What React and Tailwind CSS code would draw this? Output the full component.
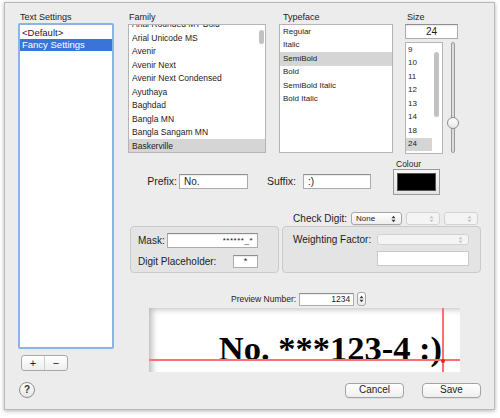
import React from "react";

const families = [
  "Arial Rounded MT Bold",
  "Arial Unicode MS",
  "Avenir",
  "Avenir Next",
  "Avenir Next Condensed",
  "Ayuthaya",
  "Baghdad",
  "Bangla MN",
  "Bangla Sangam MN",
  "Baskerville",
];
const typefaces = ["Regular", "Italic", "SemiBold", "Bold", "SemiBold Italic", "Bold Italic"];
const sizes = ["9", "10", "11", "12", "13", "14", "18", "24"];

function UpDown({ fill = "#3a3a3a" }) {
  return (
    <svg width="5" height="8" viewBox="0 0 5 8">
      <path d="M0.5 3.2 L2.5 0.7 L4.5 3.2 Z M0.5 4.8 L2.5 7.3 L4.5 4.8 Z" fill={fill} />
    </svg>
  );
}

function Field({ className, children }) {
  return (
    <div
      className={
        "bg-white border border-[#ababab] border-t-[#8e8e8e] shadow-[inset_0_1px_1px_rgba(0,0,0,0.08)] flex items-center " +
        className
      }
    >
      {children}
    </div>
  );
}

function Popup({ className, label, disabled }) {
  return (
    <div
      className={
        disabled
          ? "rounded-[3px] border border-[#d2d2d2] bg-[#f4f4f4] flex items-center justify-end pr-[5px] " + className
          : "rounded-[3px] border border-[#a6a6a6] bg-gradient-to-b from-white to-[#ededed] shadow-[0_1px_0_rgba(0,0,0,0.05)] flex items-center pl-[4px] pr-[5px] " +
            className
      }
    >
      {label && <span className="text-[8px] leading-none text-[#1c1c1c] flex-1">{label}</span>}
      <UpDown fill={disabled ? "#c4c4c4" : "#3a3a3a"} />
    </div>
  );
}

function Button({ className, children }) {
  return (
    <div
      className={
        "rounded-[4px] border border-[#a3a3a3] bg-gradient-to-b from-white to-[#efefef] shadow-[0_1px_0_rgba(0,0,0,0.06)] flex items-center justify-center text-[10px] leading-none text-[#1c1c1c] " +
        className
      }
    >
      {children}
    </div>
  );
}

export default function App() {
  return (
    <div className="w-[500px] h-[418px] bg-white pl-[4px] pt-[2px] font-['Liberation_Sans',Arial,sans-serif] text-[#1c1c1c]">
      <div className="w-[491px] h-[408px] bg-[#ececec] border border-[#b9b9b9] shadow-[0_1px_4px_rgba(0,0,0,0.3)] flex flex-col">
        {/* main row */}
        <div className="flex items-start h-[369px]">
          {/* Text settings column */}
          <div className="ml-[13px] w-[96px] mt-[9px] flex flex-col">
            <div className="h-[11px] pl-[2px] text-[9px] leading-[11px]">Text Settings</div>
            <div className="h-[326px] bg-white border-2 border-[#8db3e6] rounded-[2px] pt-[1px]">
              <div className="h-[12.5px] flex items-center pl-[2px] text-[9.5px] leading-none">&lt;Default&gt;</div>
              <div className="h-[12.5px] flex items-center pl-[2px] text-[9.5px] leading-none bg-[#3875d7] text-white">
                Fancy Settings
              </div>
            </div>
            <div className="ml-[3px] mt-[6px] w-[47px] h-[16px] rounded-[3px] border border-[#a9a9a9] bg-gradient-to-b from-white to-[#eeeeee] flex">
              <div className="flex-1 flex items-center justify-center text-[11px] leading-none border-r border-[#cfcfcf]">+</div>
              <div className="flex-1 flex items-center justify-center text-[11px] leading-none">−</div>
            </div>
          </div>

          {/* right column */}
          <div className="ml-[14px] w-[353px] mt-[9px] flex flex-col">
            {/* lists */}
            <div className="flex items-start">
              <div className="w-[138px] flex flex-col">
                <div className="h-[12px] pl-[1px] text-[9px] leading-[11px]">Family</div>
                <div className="relative h-[129px] bg-white border border-[#b4b4b4] overflow-hidden">
                  <div className="-mt-[7.5px]">
                    {families.map((f) => (
                      <div
                        key={f}
                        className={
                          f === "Baskerville"
                            ? "h-[13.5px] flex items-center pl-[3px] text-[8.5px] leading-none bg-[#d5d5d5]"
                            : "h-[13.5px] flex items-center pl-[3px] text-[8.5px] leading-none"
                        }
                      >
                        {f}
                      </div>
                    ))}
                  </div>
                  <div className="absolute left-[130px] top-[5px] w-[5px] h-[14px] rounded-full bg-[#c2c2c2]" />
                </div>
              </div>

              <div className="ml-[13px] w-[114px] flex flex-col">
                <div className="h-[12px] pl-[4px] text-[9px] leading-[11px]">Typeface</div>
                <div className="h-[129px] bg-white border border-[#b4b4b4]">
                  {typefaces.map((t) => (
                    <div
                      key={t}
                      className={
                        t === "SemiBold"
                          ? "h-[13.5px] flex items-center pl-[3px] text-[8px] leading-none bg-[#d5d5d5]"
                          : "h-[13.5px] flex items-center pl-[3px] text-[8px] leading-none"
                      }
                    >
                      {t}
                    </div>
                  ))}
                </div>
              </div>

              <div className="ml-[12px] w-[53px] flex flex-col">
                <div className="h-[12px] pl-[2px] text-[9px] leading-[11px]">Size</div>
                <Field className="h-[15px] justify-center text-[10px] leading-none">24</Field>
                <div className="mt-[3px] flex">
                  <div className="relative w-[38px] h-[112px] bg-white border border-[#b4b4b4]">
                    {sizes.map((s) => (
                      <div
                        key={s}
                        className={
                          s === "24"
                            ? "w-[26px] h-[13.5px] flex items-center pl-[2px] text-[8px] leading-none bg-[#d5d5d5]"
                            : "w-[26px] h-[13.5px] flex items-center pl-[2px] text-[8px] leading-none"
                        }
                      >
                        {s}
                      </div>
                    ))}
                    <div className="absolute left-[28px] top-[9px] w-[5px] h-[65px] rounded-full bg-[#c2c2c2]" />
                  </div>
                  <div className="relative w-[15px] h-[112px] flex justify-center pl-[5px]">
                    <div className="w-[4px] h-[111px] rounded-full bg-[#dcdcdc] border border-[#9b9b9b]" />
                    <div className="absolute left-[4px] top-[75px] w-[12px] h-[12px] rounded-full bg-gradient-to-b from-white to-[#e6e6e6] border border-[#8e8e8e]" />
                  </div>
                </div>
              </div>
            </div>

            {/* prefix / suffix / colour */}
            <div className="mt-[5px] flex items-start">
              <div className="mt-[15px] w-[49px] h-[15px] text-right text-[10.5px] leading-[15px]">Prefix:</div>
              <Field className="mt-[15px] ml-[2px] w-[69px] h-[15px] pl-[4px] text-[10px] leading-none">No.</Field>
              <div className="mt-[15px] ml-[19px] w-[33px] h-[15px] text-[10.5px] leading-[15px]">Suffix:</div>
              <Field className="mt-[15px] ml-[3px] w-[68px] h-[15px] pl-[4px] text-[10px] leading-none">:)</Field>
              <div className="ml-[22px] flex flex-col">
                <div className="h-[10px] pl-[3px] text-[8.5px] leading-[10px]">Colour</div>
                <div className="w-[47px] h-[26px] border border-[#9a9a9a] bg-gradient-to-b from-[#f6f6f6] to-[#e4e4e4] p-[3px]">
                  <div className="w-full h-full bg-black border border-[#555]" />
                </div>
              </div>
            </div>

            {/* check digit */}
            <div className="mt-[17px] h-[13px] flex items-center justify-end pr-[3px]">
              <span className="mr-[4px] text-[10px] leading-none">Check Digit:</span>
              <Popup className="w-[51px] h-[13px]" label="None" />
              <Popup className="ml-[4px] w-[34px] h-[13px]" disabled />
              <Popup className="ml-[4px] w-[34px] h-[13px]" disabled />
            </div>

            {/* boxes */}
            <div className="mt-[1px] ml-[2px] flex gap-[3px]">
              <div className="w-[149px] h-[47px] rounded-[4px] border border-[#cacaca] bg-[#e4e4e4] pt-[6px] pl-[7px] pr-[20px]">
                <div className="h-[15px] flex items-center">
                  <span className="text-[10px] leading-none">Mask:</span>
                  <Field className="ml-auto w-[91px] h-[15px] justify-end pr-[4px] text-[8px] leading-none tracking-[0.5px]">
                    ******_*
                  </Field>
                </div>
                <div className="mt-[7px] h-[13px] flex items-center">
                  <span className="text-[10px] leading-none">Digit Placeholder:</span>
                  <Field className="ml-auto w-[25px] h-[13px] justify-center text-[9px] leading-none">*</Field>
                </div>
              </div>
              <div className="w-[199px] h-[47px] rounded-[4px] border border-[#cacaca] bg-[#e4e4e4] pt-[7px] pl-[10px] pr-[11px]">
                <div className="h-[11px] flex items-center">
                  <span className="text-[10px] leading-none">Weighting Factor:</span>
                  <Popup className="ml-auto w-[92px] h-[11px]" disabled />
                </div>
                <div className="mt-[6px] flex justify-end">
                  <div className="w-[92px] h-[15px] bg-white border border-[#c9c9c9]" />
                </div>
              </div>
            </div>

            {/* preview number */}
            <div className="mt-[19px] ml-[103px] h-[14px] flex items-center">
              <span className="text-[8.5px] leading-none">Preview Number:</span>
              <Field className="ml-[3px] w-[55px] h-[13px] justify-end pr-[3px] text-[8.5px] leading-none">1234</Field>
              <div className="ml-[3px] w-[9px] h-[14px] rounded-[3px] border border-[#a6a6a6] bg-gradient-to-b from-white to-[#ececec] flex items-center justify-center">
                <UpDown />
              </div>
            </div>

            {/* preview */}
            <div className="relative mt-[2px] ml-[21px] w-[311px] h-[64px] bg-white shadow-[inset_6px_4px_6px_-3px_rgba(0,0,0,0.28)] overflow-hidden flex justify-end pr-[18px] pt-[23px]">
              <span className="font-['Liberation_Serif','Times_New_Roman',serif] font-bold text-[34.5px] leading-[34.5px] text-black whitespace-nowrap">
                No. ***123-4 :)
              </span>
              <div className="absolute left-0 right-0 top-[51px] h-[1.5px] bg-[#ff6f6f]" />
              <div className="absolute top-0 bottom-0 left-[293px] w-[1.5px] bg-[#ff6f6f]" />
              <div className="absolute left-[292px] top-[51px] w-[4px] h-[4px] rounded-full bg-[#ff1a1a]" />
            </div>
          </div>
        </div>

        {/* bottom row */}
        <div className="mt-[10px] flex items-center">
          <div className="ml-[14px] w-[16px] h-[16px] rounded-full border border-[#8f8f8f] bg-gradient-to-b from-white to-[#e6e6e6] flex items-center justify-center text-[10px] font-bold leading-none text-[#333]">
            ?
          </div>
          <Button className="ml-auto w-[59px] h-[15px]">Cancel</Button>
          <Button className="ml-[18px] mr-[13px] w-[59px] h-[15px]">Save</Button>
        </div>
      </div>
    </div>
  );
}
